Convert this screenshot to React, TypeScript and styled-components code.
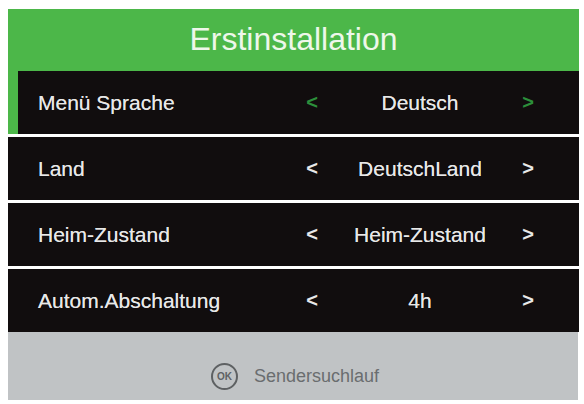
import React from "react";
import styled, { createGlobalStyle } from "styled-components";

const Global = createGlobalStyle`
  html, body { margin: 0; padding: 0; background: #ffffff; }
  body { font-family: "Liberation Sans", Arial, sans-serif; }
`;

const Screen = styled.div`
  width: 571px;
  margin: 9px 0 0 8px;
  display: flex;
  flex-direction: column;
`;

const Header = styled.div`
  height: 62px;
  background: #4cb749;
  color: #eef7ea;
  font-size: 32px;
  display: flex;
  align-items: center;
  justify-content: center;
  padding-bottom: 2px;
  box-sizing: border-box;
`;

const List = styled.div`
  display: flex;
  flex-direction: column;
  gap: 3px;
`;

const Row = styled.div<{ $active?: boolean }>`
  height: 63px;
  background: #110d0e;
  display: grid;
  grid-template-columns: 1fr 30px 186px 30px 36px;
  align-items: center;
  padding-left: 30px;
  color: #e8e8e8;
  font-size: 21px;
  text-shadow: 0 0 0.6px rgba(232, 232, 232, 0.8);
  box-shadow: ${(p) => (p.$active ? "inset 10px 0 0 #4cb749" : "none")};
`;

const Label = styled.span`
  white-space: nowrap;
`;

const Arrow = styled.span<{ $active?: boolean }>`
  text-align: center;
  color: ${(p) => (p.$active ? "#2c8f3b" : "#e8e8e8")};
  text-shadow: none;
  font-weight: bold;
  font-size: 20px;
`;

const Value = styled.span`
  text-align: center;
  white-space: nowrap;
`;

const Footer = styled.div`
  height: 68px;
  width: 570px;
  background: #c0c3c5;
  display: flex;
  align-items: center;
  justify-content: center;
  gap: 16px;
  padding: 20px 0 0 4px;
  box-sizing: border-box;
`;

const OkBadge = styled.span`
  width: 27px;
  height: 27px;
  border: 2px solid #5e6163;
  border-radius: 50%;
  box-sizing: border-box;
  display: flex;
  align-items: center;
  justify-content: center;
  color: #5e6163;
  font-size: 10px;
  font-weight: bold;
`;

const FooterText = styled.span`
  color: #6a6d6f;
  font-size: 18px;
`;

const rows = [
  { label: "Menü Sprache", value: "Deutsch", active: true },
  { label: "Land", value: "DeutschLand" },
  { label: "Heim-Zustand", value: "Heim-Zustand" },
  { label: "Autom.Abschaltung", value: "4h" },
];

export default function App() {
  return (
    <>
      <Global />
      <Screen>
        <Header>Erstinstallation</Header>
        <List>
          {rows.map((r) => (
            <Row key={r.label} $active={r.active}>
              <Label>{r.label}</Label>
              <Arrow $active={r.active}>&lt;</Arrow>
              <Value>{r.value}</Value>
              <Arrow $active={r.active}>&gt;</Arrow>
              <span />
            </Row>
          ))}
        </List>
        <Footer>
          <OkBadge>OK</OkBadge>
          <FooterText>Sendersuchlauf</FooterText>
        </Footer>
      </Screen>
    </>
  );
}
